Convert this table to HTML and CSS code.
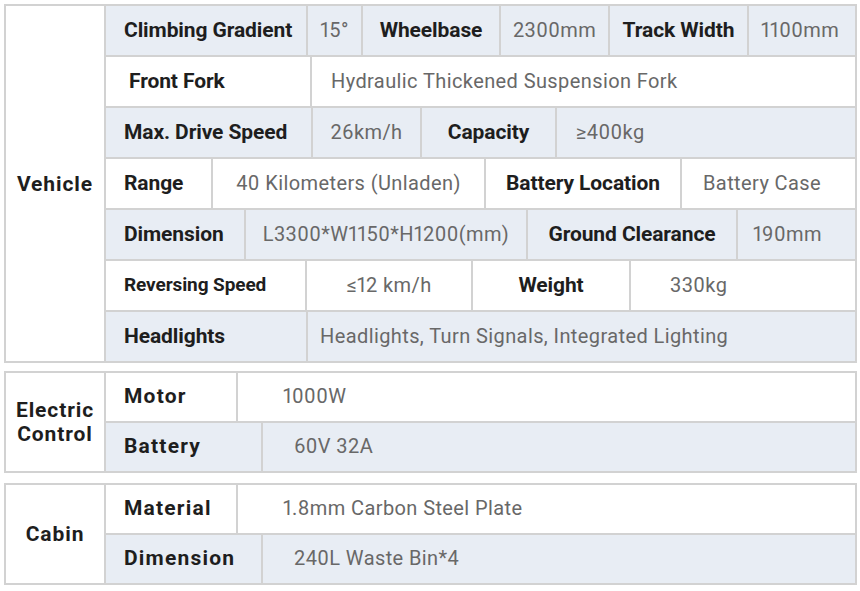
FILE: index.html
```html
<!DOCTYPE html>
<html lang="en">
<head>
<meta charset="utf-8">
<title>Specifications</title>
<link rel="stylesheet" href="styles.css">
</head>
<body>
<div class="spec">
  <section class="group g-vehicle">
    <div class="cat">Vehicle</div>
    <div class="rows">
      <div class="row r1 shade">
        <div class="cell lab">Climbing Gradient</div>
        <div class="cell val ctr">15°</div>
        <div class="cell lab ctr">Wheelbase</div>
        <div class="cell val ctr">2300mm</div>
        <div class="cell lab ctr">Track Width</div>
        <div class="cell val pl12">1100mm</div>
      </div>
      <div class="row r2">
        <div class="cell lab pl23">Front Fork</div>
        <div class="cell val pl19">Hydraulic Thickened Suspension Fork</div>
      </div>
      <div class="row r3 shade">
        <div class="cell lab">Max. Drive Speed</div>
        <div class="cell val ctr">26km/h</div>
        <div class="cell lab ctr">Capacity</div>
        <div class="cell val pl19">≥400kg</div>
      </div>
      <div class="row r4">
        <div class="cell lab">Range</div>
        <div class="cell val ctr">40 Kilometers (Unladen)</div>
        <div class="cell lab ctr">Battery Location</div>
        <div class="cell val pl21">Battery Case</div>
      </div>
      <div class="row r5 shade">
        <div class="cell lab">Dimension</div>
        <div class="cell val ctr">L3300*W1150*H1200(mm)</div>
        <div class="cell lab ctr">Ground Clearance</div>
        <div class="cell val pl15">190mm</div>
      </div>
      <div class="row r6">
        <div class="cell lab small">Reversing Speed</div>
        <div class="cell val ctr">≤12 km/h</div>
        <div class="cell lab ctr">Weight</div>
        <div class="cell val pl39">330kg</div>
      </div>
      <div class="row r7 shade">
        <div class="cell lab">Headlights</div>
        <div class="cell val pl12">Headlights, Turn Signals, Integrated Lighting</div>
      </div>
    </div>
  </section>

  <section class="group g-electric">
    <div class="cat">Electric<br>Control</div>
    <div class="rows">
      <div class="row short e1">
        <div class="cell lab wide">Motor</div>
        <div class="cell val pl45">1000W</div>
      </div>
      <div class="row short e2 shade">
        <div class="cell lab wide">Battery</div>
        <div class="cell val pl31">60V 32A</div>
      </div>
    </div>
  </section>

  <section class="group g-cabin">
    <div class="cat">Cabin</div>
    <div class="rows">
      <div class="row short e1">
        <div class="cell lab wide">Material</div>
        <div class="cell val pl45">1.8mm Carbon Steel Plate</div>
      </div>
      <div class="row short e2 shade">
        <div class="cell lab wide">Dimension</div>
        <div class="cell val pl31">240L Waste Bin*4</div>
      </div>
    </div>
  </section>
</div>
</body>
</html>
```
FILE: styles.css
```css
* { box-sizing: border-box; }

body {
  margin: 0;
  background: #ffffff;
  font-family: Roboto, "Noto Sans", sans-serif;
}

.spec {
  padding: 4px 0 0 4px;
  width: 857px;
}

.group {
  display: flex;
  width: 853px;
  border: 2px solid #d2d2d2;
  background: #ffffff;
}

.g-vehicle { margin-bottom: 8px; }
.g-electric { margin-bottom: 10px; }

.cat {
  width: 100px;
  flex: none;
  border-right: 2px solid #d2d2d2;
  display: flex;
  align-items: center;
  justify-content: center;
  text-align: center;
  font-weight: 700;
  font-size: 21px;
  line-height: 24px;
  letter-spacing: 0.9px;
  color: #1e1e1e;
}

.rows {
  flex: 1;
  display: flex;
  flex-direction: column;
}

.row {
  display: grid;
  height: 51px;
  border-bottom: 2px solid #d2d2d2;
}

.row:last-child {
  height: 49px;
  border-bottom: 0;
}

.row.short { height: 50px; }
.row.short:last-child { height: 48px; }

.shade { background: #e8edf4; }

.r1 { grid-template-columns: 202px 55px 138px 109px 139px 1fr; }
.r2 { grid-template-columns: 206px 1fr; }
.r3 { grid-template-columns: 207px 109px 135px 1fr; }
.r4 { grid-template-columns: 107px 273px 196px 1fr; }
.r5 { grid-template-columns: 140px 282px 210px 1fr; }
.r6 { grid-template-columns: 201px 166px 158px 1fr; }
.r7 { grid-template-columns: 202px 1fr; }
.e1 { grid-template-columns: 132px 1fr; }
.e2 { grid-template-columns: 157px 1fr; }

.cell {
  display: flex;
  align-items: center;
  border-right: 2px solid #d2d2d2;
  white-space: nowrap;
  padding-left: 18px;
  padding-bottom: 2px;
}

.cell:last-child { border-right: 0; }

.lab {
  font-weight: 700;
  font-size: 21px;
  color: #1e1e1e;
  letter-spacing: -0.1px;
}

.lab.small { font-size: 19px; }
.lab.wide { letter-spacing: 1.2px; }

.val {
  font-weight: 400;
  font-size: 20px;
  color: #686868;
  letter-spacing: 0.4px;
  font-variant-numeric: proportional-nums;
}

.ctr {
  justify-content: center;
  padding-left: 0;
}

.pl12 { padding-left: 12px; }
.pl15 { padding-left: 15px; }
.pl19 { padding-left: 19px; }
.pl21 { padding-left: 21px; }
.pl23 { padding-left: 23px; }
.pl31 { padding-left: 31px; }
.pl39 { padding-left: 39px; }
.pl45 { padding-left: 45px; }
```
